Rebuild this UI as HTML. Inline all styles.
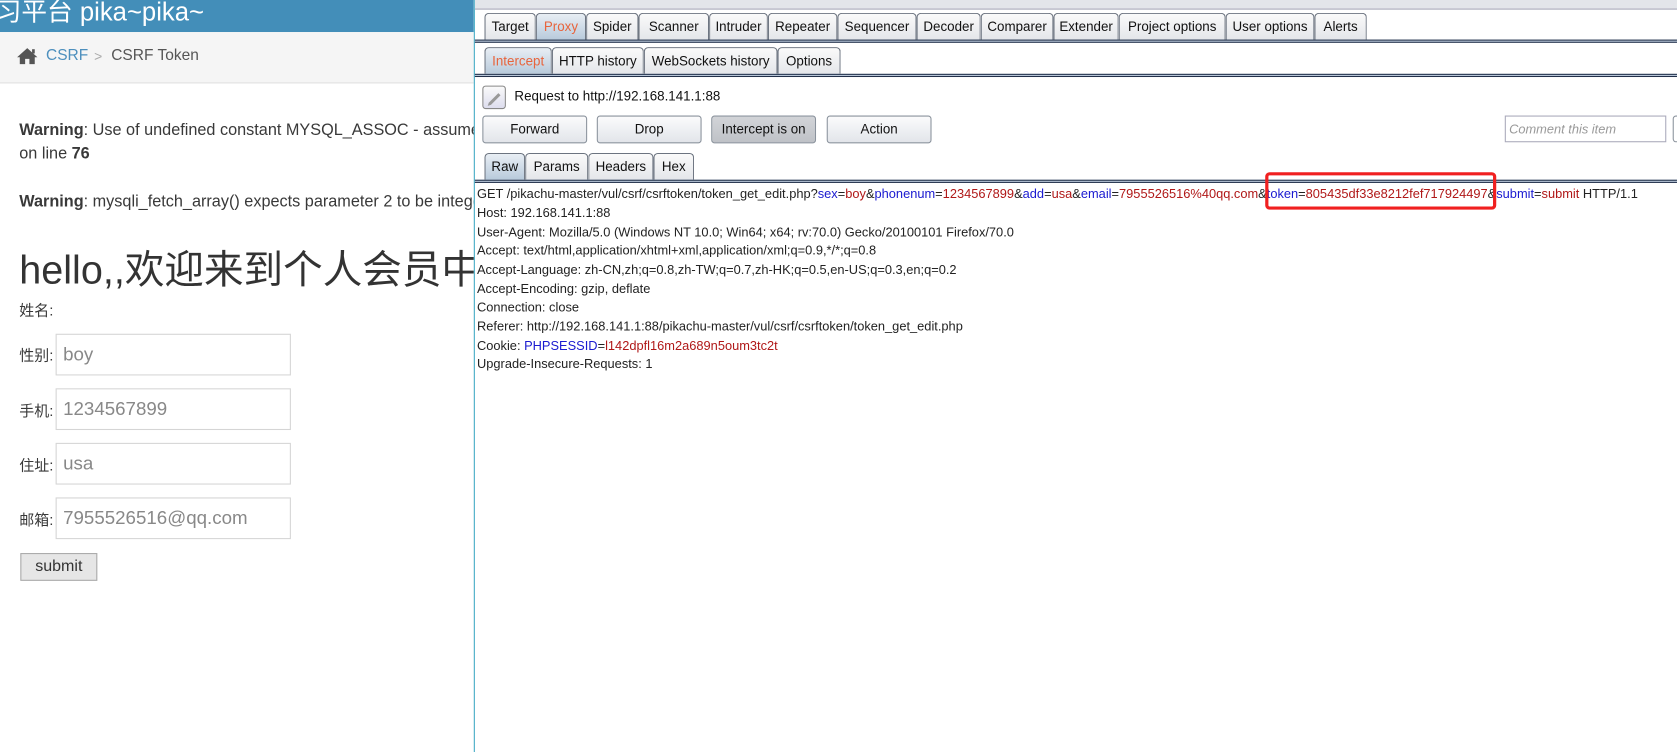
<!DOCTYPE html>
<html><head><meta charset="utf-8"><style>
*{margin:0;padding:0;box-sizing:border-box}
html,body{width:1677px;height:752px;overflow:hidden;background:#fff}
#w{position:absolute;left:0;top:0;width:1568px;height:703px;transform:scale(1.0695,1.0697);transform-origin:0 0;font-family:"Liberation Sans","Noto Sans CJK SC",sans-serif}
#lp{position:absolute;left:0;top:0;width:443px;height:703px;overflow:hidden}
.a{position:absolute;white-space:nowrap}
.L{color:#393939;font-size:15.2px}
.inp{position:absolute;left:52px;width:220px;height:39px;border:1px solid #d5d5d5;font-size:17.5px;color:#888;padding:8px 6px}
.lab{position:absolute;left:18px;font-size:14px;color:#393939}
.tab{position:absolute;height:25px;border:1px solid #6c7480;border-bottom:none;border-radius:4px 4px 0 0;background:linear-gradient(#fafafa,#e4e6ea);font-size:12.5px;text-align:center;line-height:24px;color:#111}
.tab.on{background:linear-gradient(#e8eef4,#b8cadb);color:#e8643c}
.bl{position:absolute;left:444px;width:1124px;height:3px;border-top:1px solid #22304a;border-bottom:1px solid #22304a;background:#c0cfe0}
.btn{position:absolute;top:108px;height:26px;width:98px;border:1px solid #8a929c;border-radius:3px;background:linear-gradient(#fbfbfc,#e2e5ea);font-size:12.5px;text-align:center;line-height:24px;color:#111}
.rq{position:absolute;left:446px;font-size:12px;color:#222;white-space:nowrap}
.k{color:#1a1ad0}.v{color:#b01818}
</style></head><body><div id="w">
<div id="lp">
<div class="a" style="left:0;top:0;width:443px;height:30px;background:#438eb9"></div>
<div class="a" style="left:-4px;top:-9px;color:#fff;font-size:24px">习平台 pika~pika~</div>
<div class="a" style="left:0;top:30px;width:443px;height:48px;background:#f5f5f5;border-bottom:1px solid #e2e2e2"></div>
<svg class="a" style="left:15px;top:44px" width="21" height="17" viewBox="0 0 21 17"><path d="M10.5 1L1 9.5h2.5V16h5v-5h4v5h5V9.5H20z" fill="#555"/><rect x="15" y="2" width="2.5" height="4" fill="#555"/></svg>
<div class="a" style="left:43px;top:44px;font-size:14.5px;color:#4c8fbd">CSRF</div>
<div class="a" style="left:88px;top:45px;font-size:13px;color:#aaa">&gt;</div>
<div class="a" style="left:104px;top:44px;font-size:14.5px;color:#555">CSRF Token</div>
<div class="a L" style="left:18px;top:113px"><b>Warning</b>: Use of undefined constant MYSQL_ASSOC - assume</div>
<div class="a L" style="left:18px;top:135px">on line <b>76</b></div>
<div class="a L" style="left:18px;top:180px"><b>Warning</b>: mysqli_fetch_array() expects parameter 2 to be integer</div>
<div class="a" style="left:18px;top:222px;font-size:37px;color:#333">hello,,欢迎来到个人会员中心</div>
<div class="lab" style="top:280px">姓名:</div>
<div class="lab" style="top:322px">性别:</div><div class="inp" style="top:312px">boy</div>
<div class="lab" style="top:374px">手机:</div><div class="inp" style="top:363px">1234567899</div>
<div class="lab" style="top:425px">住址:</div><div class="inp" style="top:414px">usa</div>
<div class="lab" style="top:476px">邮箱:</div><div class="inp" style="top:465px">7955526516@qq.com</div>
<div class="a" style="left:19px;top:517px;width:72px;height:26px;background:#e6e6e6;border:1px solid #aaa;font-size:15px;color:#333;text-align:center;line-height:24px">submit</div>
</div>
<div class="a" style="left:443px;top:0;width:1px;height:703px;background:#3fa9c4"></div>
<div class="a" style="left:444px;top:0;width:1124px;height:9px;background:#e3e5ea;border-bottom:1px solid #aab"></div>
<div class="tab" style="left:453px;top:12px;width:48px">Target</div>
<div class="tab on" style="left:501px;top:12px;width:47px">Proxy</div>
<div class="tab" style="left:548px;top:12px;width:49px">Spider</div>
<div class="tab" style="left:597px;top:12px;width:66px">Scanner</div>
<div class="tab" style="left:663px;top:12px;width:55px">Intruder</div>
<div class="tab" style="left:718px;top:12px;width:65px">Repeater</div>
<div class="tab" style="left:783px;top:12px;width:74px">Sequencer</div>
<div class="tab" style="left:857px;top:12px;width:60px">Decoder</div>
<div class="tab" style="left:917px;top:12px;width:68px">Comparer</div>
<div class="tab" style="left:985px;top:12px;width:61px">Extender</div>
<div class="tab" style="left:1046px;top:12px;width:100px">Project options</div>
<div class="tab" style="left:1146px;top:12px;width:83px">User options</div>
<div class="tab" style="left:1229px;top:12px;width:49px">Alerts</div>
<div class="bl" style="top:37px"></div>
<div class="tab on" style="left:453px;top:44px;width:63px">Intercept</div>
<div class="tab" style="left:516px;top:44px;width:86px">HTTP history</div>
<div class="tab" style="left:602px;top:44px;width:125px">WebSockets history</div>
<div class="tab" style="left:727px;top:44px;width:59px">Options</div>
<div class="bl" style="top:69px"></div>
<div class="a" style="left:451px;top:80px;width:22px;height:22px;border:1px solid #888;border-radius:3px;background:linear-gradient(#fafafa,#dde)"></div>
<svg class="a" style="left:451px;top:80px" width="22" height="22"><path d="M6 16l9-9 2 2-9 9-3 1z" fill="#999"/></svg>
<div class="a" style="left:481px;top:83px;font-size:12.5px;color:#111">Request to http://192.168.141.1:88</div>
<div class="btn" style="left:451px">Forward</div>
<div class="btn" style="left:558px">Drop</div>
<div class="btn" style="left:665px;background:linear-gradient(#d2d4d8,#bfc2c7)">Intercept is on</div>
<div class="btn" style="left:773px">Action</div>
<div class="a" style="left:1407px;top:108px;width:151px;height:25px;border:1px solid #aab;font-size:12px;font-style:italic;color:#999;padding:5px 3px">Comment this item</div>
<div class="a" style="left:1564px;top:108px;width:10px;height:25px;border:1px solid #8a929c;border-radius:3px"></div>
<div class="tab on" style="left:453px;top:143px;width:38px;color:#111">Raw</div>
<div class="tab" style="left:491px;top:143px;width:59px">Params</div>
<div class="tab" style="left:550px;top:143px;width:61px">Headers</div>
<div class="tab" style="left:611px;top:143px;width:38px">Hex</div>
<div class="bl" style="top:168px"></div>
<div class="rq" style="top:174px">GET /pikachu-master/vul/csrf/csrftoken/token_get_edit.php?<span class="k">sex</span>=<span class="v">boy</span>&amp;<span class="k">phonenum</span>=<span class="v">1234567899</span>&amp;<span class="k">add</span>=<span class="v">usa</span>&amp;<span class="k">email</span>=<span class="v">7955526516%40qq.com</span>&amp;<span class="k">token</span>=<span class="v">805435df33e8212fef717924497</span>&amp;<span class="k">submit</span>=<span class="v">submit</span> HTTP/1.1</div>
<div class="rq" style="top:192px">Host: 192.168.141.1:88</div>
<div class="rq" style="top:210px">User-Agent: Mozilla/5.0 (Windows NT 10.0; Win64; x64; rv:70.0) Gecko/20100101 Firefox/70.0</div>
<div class="rq" style="top:227px">Accept: text/html,application/xhtml+xml,application/xml;q=0.9,*/*;q=0.8</div>
<div class="rq" style="top:245px">Accept-Language: zh-CN,zh;q=0.8,zh-TW;q=0.7,zh-HK;q=0.5,en-US;q=0.3,en;q=0.2</div>
<div class="rq" style="top:263px">Accept-Encoding: gzip, deflate</div>
<div class="rq" style="top:280px">Connection: close</div>
<div class="rq" style="top:298px">Referer: http://192.168.141.1:88/pikachu-master/vul/csrf/csrftoken/token_get_edit.php</div>
<div class="rq" style="top:316px">Cookie: <span class="k">PHPSESSID</span>=<span class="v">l142dpfl16m2a689n5oum3tc2t</span></div>
<div class="rq" style="top:333px">Upgrade-Insecure-Requests: 1</div>
<div class="a" style="left:1183px;top:161px;width:216px;height:35px;border:3px solid #f02020;border-radius:4px"></div>
</div></body></html>
